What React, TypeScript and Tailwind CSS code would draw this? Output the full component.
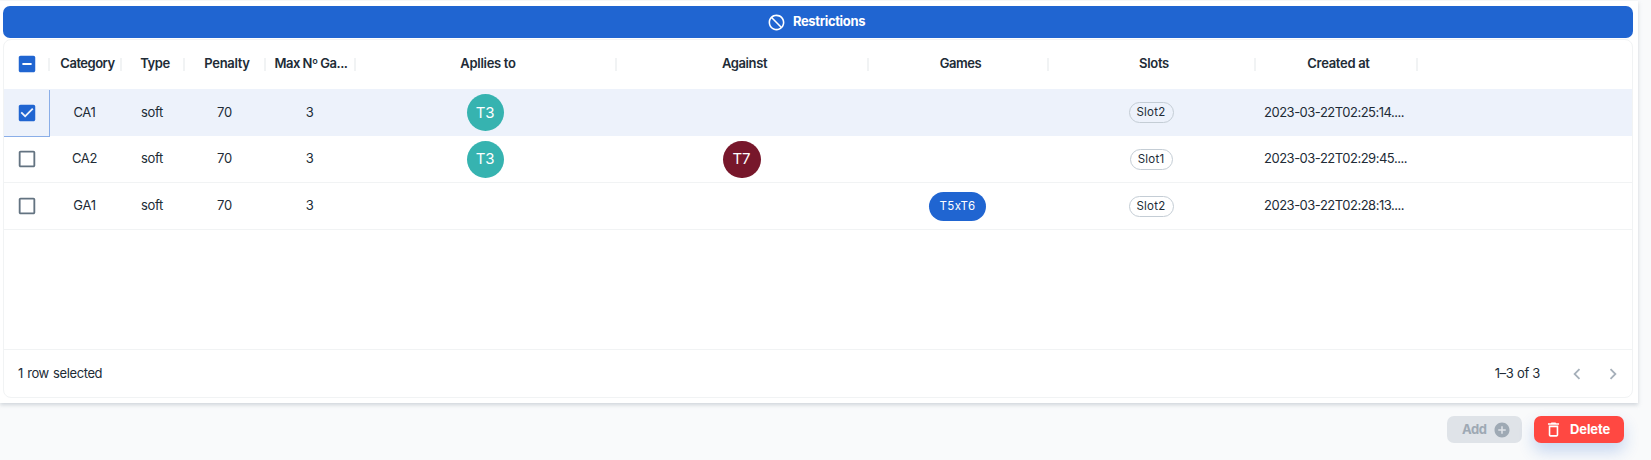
import React from 'react';

type Column = { title: string; width: string; tracking: string };

type Row = {
  id: string;
  selected: boolean;
  appliesTo?: string;
  against?: string;
  game?: string;
  slot: string;
  createdAt: string;
};

const columns: Column[] = [
  { title: 'Category', width: 'w-[72px]', tracking: 'pl-[5px] tracking-[-0.5px]' },
  { title: 'Type', width: 'w-[63px]', tracking: 'pl-[5px] tracking-[-0.4px]' },
  { title: 'Penalty', width: 'w-[81px]', tracking: 'pl-[5px] tracking-[-0.3px]' },
  { title: 'Max Nº Ga...', width: 'w-[90px]', tracking: 'pl-[2px] tracking-[-0.5px]' },
  { title: 'Apllies to', width: 'w-[261px]', tracking: 'pl-[5px] tracking-[-0.3px]' },
  { title: 'Against', width: 'w-[252px]', tracking: 'pl-[5px] tracking-[-0.4px]' },
  { title: 'Games', width: 'w-[180px]', tracking: 'pl-[5px] tracking-[-0.4px]' },
  { title: 'Slots', width: 'w-[207px]', tracking: 'pl-[5px] tracking-[-0.3px]' },
  { title: 'Created at', width: 'w-[162px]', tracking: 'pl-[5px] tracking-[-0.3px]' },
];

const rows: Row[] = [
  { id: 'CA1', selected: true, appliesTo: 'T3', slot: 'Slot2', createdAt: '2023-03-22T02:25:14....' },
  { id: 'CA2', selected: false, appliesTo: 'T3', against: 'T7', slot: 'Slot1', createdAt: '2023-03-22T02:29:45....' },
  { id: 'GA1', selected: false, game: 'T5xT6', slot: 'Slot2', createdAt: '2023-03-22T02:28:13....' },
];

const checkboxPaths = {
  empty: 'M19 5v14H5V5h14m0-2H5c-1.1 0-2 .9-2 2v14c0 1.1.9 2 2 2h14c1.1 0 2-.9 2-2V5c0-1.1-.9-2-2-2z',
  checked:
    'M19 3H5c-1.11 0-2 .9-2 2v14c0 1.1.89 2 2 2h14c1.11 0 2-.9 2-2V5c0-1.1-.89-2-2-2zm-9 14l-5-5 1.41-1.41L10 14.17l7.59-7.59L19 8l-9 9z',
  mixed: 'M19 3H5c-1.1 0-2 .9-2 2v14c0 1.1.9 2 2 2h14c1.1 0 2-.9 2-2V5c0-1.1-.9-2-2-2zm-2 10H7v-2h10v2z',
};

function Icon({ d, className }: { d: string; className: string }) {
  return (
    <svg viewBox="0 0 24 24" fill="currentColor" className={`shrink-0 ${className}`}>
      <path d={d} />
    </svg>
  );
}

function Checkbox({ state }: { state: keyof typeof checkboxPaths }) {
  return (
    <Icon
      d={checkboxPaths[state]}
      className={`size-[22px] ${state === 'empty' ? 'text-[#637381]' : 'text-[#2065d1]'}`}
    />
  );
}

function Cell({ width, children }: { width: string; children?: React.ReactNode }) {
  return <div className={`flex h-full shrink-0 items-center justify-center pr-[3px] ${width}`}>{children}</div>;
}

function Avatar({ label, color }: { label: string; color: string }) {
  return (
    <span
      className={`flex h-[37px] items-center justify-center rounded-full pt-px text-[15px] tracking-[-0.1px] text-white [font-kerning:none] ${
        label === 'T7' ? 'w-[38px]' : 'w-[37px]'
      } ${color}`}
    >
      {label}
    </span>
  );
}

function DataRow({ row }: { row: Row }) {
  return (
    <div
      className={`flex h-[47px] items-center border-b ${
        row.selected ? 'border-[#edf2fb] bg-[#edf2fb] pt-px' : 'border-[#f1f3f4]'
      }`}
    >
      <div className="relative flex h-full w-[46px] shrink-0 items-center pl-[11.5px]">
        <Checkbox state={row.selected ? 'checked' : 'empty'} />
        {row.selected && (
          <span className="absolute top-0 -bottom-[2px] left-0 w-[46px] border-r border-b border-[#8aaee8]" />
        )}
      </div>
      <Cell width="w-[72px]">{row.id}</Cell>
      <Cell width="w-[63px]">soft</Cell>
      <Cell width="w-[81px]">
        <span className="pl-px">70</span>
      </Cell>
      <Cell width="w-[90px]">3</Cell>
      <Cell width="w-[261px]">{row.appliesTo && <Avatar label={row.appliesTo} color="bg-[#36b3b0]" />}</Cell>
      <Cell width="w-[252px]">{row.against && <Avatar label={row.against} color="bg-[#77172b]" />}</Cell>
      <Cell width="w-[180px]">
        {row.game && (
          <span className="flex h-[29px] w-[57px] items-center justify-center rounded-full bg-[#2065d1] pt-px text-[11.5px] tracking-[0.35px] text-white">
            {row.game}
          </span>
        )}
      </Cell>
      <Cell width="w-[207px]">
        <span
          className={`flex h-[21px] items-center justify-center rounded-full border border-[#c4cdd5] pt-px text-[11.5px] tracking-[0.25px] ${
            row.slot === 'Slot1' ? 'w-[43px]' : 'w-[45px]'
          }`}
        >
          {row.slot}
        </span>
      </Cell>
      <div className="w-[162px] shrink-0 pl-[8px] tracking-[-0.49px] whitespace-nowrap">{row.createdAt}</div>
    </div>
  );
}

export default function App() {
  return (
    <div className="h-[460px] w-[1651px] overflow-hidden bg-[#f9fafb] pt-px font-['Inter',sans-serif] text-[13px] text-[#212b36]">
      <div className="h-[402px] w-[1638px] bg-white pt-[5px] pl-[3px] shadow-[0_2px_4px_rgba(145,158,171,0.4)]">
        <div className="flex h-8 w-[1630px] items-center justify-center gap-[7px] rounded-[7px] bg-[#2065d1] pr-[4px] text-white">
          <Icon
            className="size-[19px] -scale-x-100"
            d="M12 2C6.48 2 2 6.48 2 12s4.48 10 10 10 10-4.48 10-10S17.52 2 12 2zM4 12c0-4.42 3.58-8 8-8 1.85 0 3.55.63 4.9 1.69L5.69 16.9C4.63 15.55 4 13.85 4 12zm8 8c-1.85 0-3.55-.63-4.9-1.69L18.31 7.1C19.37 8.45 20 10.15 20 12c0 4.42-3.58 8-8 8z"
          />
          <span className="text-[13px] font-bold tracking-[-0.35px]">Restrictions</span>
        </div>
        <div className="mt-px h-[359px] w-[1630px] overflow-hidden rounded-lg border border-[#f1f3f4] tracking-[-0.3px]">
          <div className="flex h-[49px] items-center pb-[1px]">
            <div className="flex h-full w-[46px] shrink-0 items-center justify-between pl-[11.5px]">
              <Checkbox state="mixed" />
              <span className="h-[13px] w-[2px] bg-[#f1f3f4]" />
            </div>
            {columns.map((column) => (
              <div key={column.title} className={`flex h-full shrink-0 items-center ${column.width}`}>
                <span className={`flex-1 text-center font-semibold whitespace-nowrap ${column.tracking}`}>
                  {column.title}
                </span>
                <span className="h-[13px] w-[2px] bg-[#f1f3f4]" />
              </div>
            ))}
          </div>
          <div className="h-[260px]">
            {rows.map((row) => (
              <DataRow key={row.id} row={row} />
            ))}
          </div>
          <div className="flex h-[48px] items-center border-t border-[#f1f3f4] pl-[14px]">
            <span className="tracking-[-0.4px] [word-spacing:1px]">1 row selected</span>
            <span className="ml-auto">1–3 of 3</span>
            <Icon className="ml-[26px] size-[22px] text-[#a6b0ba]" d="M15.41 7.41L14 6l-6 6 6 6 1.41-1.41L10.83 12z" />
            <Icon className="mr-[8px] ml-[14px] size-[22px] text-[#a6b0ba]" d="M10 6L8.59 7.41 13.17 12l-4.58 4.59L10 18l6-6z" />
          </div>
        </div>
      </div>
      <div className="mt-[13px] flex justify-end gap-3 pr-[27px] font-bold tracking-[-0.1px]">
        <button className="flex h-[27px] w-[75px] items-center rounded-[7px] bg-[#dfe3e8] pl-[15px] text-[#9ea9b4]">
          <span className="tracking-[-0.4px]">Add</span>
          <Icon
            className="ml-auto mr-[11px] size-[18px]"
            d="M12 2C6.48 2 2 6.48 2 12s4.48 10 10 10 10-4.48 10-10S17.52 2 12 2zm5 11h-4v4h-2v-4H7v-2h4V7h2v4h4v2z"
          />
        </button>
        <button className="flex h-[27px] w-[90px] items-center rounded-[7px] bg-[#ff4842] pl-[10px] text-white shadow-[0_8px_16px_rgba(32,101,209,0.24)]">
          <Icon
            className="mr-[7px] size-[19px]"
            d="M6 19c0 1.1.9 2 2 2h8c1.1 0 2-.9 2-2V7H6v12zM8 9h8v10H8V9zm7.5-5l-1-1h-5l-1 1H5v2h14V4z"
          />
          <span className="tracking-[-0.1px]">Delete</span>
        </button>
      </div>
    </div>
  );
}
